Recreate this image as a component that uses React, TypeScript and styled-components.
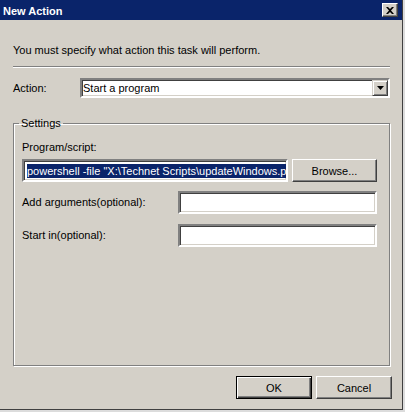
import React from 'react';
import styled, { createGlobalStyle } from 'styled-components';

const Global = createGlobalStyle`
  html, body { margin: 0; padding: 0; background: #dcdcdc; }
  body {
    width: 405px; height: 412px; overflow: hidden;
    font-family: "Liberation Sans", Arial, sans-serif;
    font-size: 11px; color: #000;
  }
`;

const Window = styled.div`
  width: 403px;
  height: 410px;
  box-sizing: border-box;
  background: #d4d0c8;
  border-right: 1px solid #404040;
  border-bottom: 1px solid #404040;
  display: flex;
  flex-direction: column;
`;

const TitleBar = styled.div`
  height: 20px;
  box-sizing: border-box;
  background: #0a246a;
  display: flex;
  align-items: center;
  justify-content: space-between;
  padding: 0 4px 0 3px;
`;

const Title = styled.span`
  color: #fff;
  font-weight: bold;
  font-size: 11px;
  line-height: 13px;
  padding-top: 3px;
`;

const CloseButton = styled.div`
  width: 16px;
  height: 14px;
  box-sizing: border-box;
  background: #d4d0c8;
  border-top: 1px solid #fff;
  border-left: 1px solid #fff;
  border-right: 1px solid #404040;
  border-bottom: 1px solid #404040;
  box-shadow: inset -1px -1px 0 #808080;
  display: flex;
  align-items: center;
  justify-content: center;
`;

const Content = styled.div`
  flex: 1;
  display: flex;
  flex-direction: column;
  padding: 0 12px 0 13px;
`;

const Intro = styled.div`
  margin-top: 24px;
  line-height: 13px;
`;

const Separator = styled.div`
  margin-top: 9px;
  height: 0;
  border-top: 1px solid #808080;
  border-bottom: 1px solid #fff;
`;

const Row = styled.div<{ $mt: number }>`
  display: flex;
  align-items: center;
  margin-top: ${(p) => p.$mt}px;
`;

const Label = styled.span<{ $w?: number }>`
  line-height: 13px;
  ${(p) => (p.$w ? `width: ${p.$w}px; flex: none;` : 'flex: 1;')}
`;

const Sunken = styled.div<{ $w?: number; $h: number }>`
  box-sizing: border-box;
  height: ${(p) => p.$h}px;
  ${(p) => (p.$w ? `width: ${p.$w}px; flex: none;` : 'flex: 1; min-width: 0;')}
  background: #fff;
  border-style: solid;
  border-width: 2px;
  border-color: #808080 #fff #fff #808080;
  box-shadow: inset 1px 1px 0 #404040, inset -1px -1px 0 #d4d0c8;
  display: flex;
  align-items: center;
  overflow: hidden;
  white-space: nowrap;
`;

const ComboText = styled.span`
  flex: 1;
  padding-left: 1px;
  line-height: 13px;
`;

const DropButton = styled.div`
  width: 16px;
  height: 16px;
  box-sizing: border-box;
  flex: none;
  background: #d4d0c8;
  border-top: 1px solid #d4d0c8;
  border-left: 1px solid #d4d0c8;
  border-right: 1px solid #404040;
  border-bottom: 1px solid #404040;
  box-shadow: inset 1px 1px 0 #fff, inset -1px -1px 0 #808080;
  display: flex;
  align-items: center;
  justify-content: center;
`;

const GroupBox = styled.fieldset`
  margin: 19px 0 0 0;
  height: 249px;
  box-sizing: border-box;
  padding: 0 12px 0 8px;
  border: 1px solid #808080;
  box-shadow: 1px 1px 0 #fff, inset 1px 1px 0 #fff;
  display: flex;
  flex-direction: column;
  min-width: 0;
`;

const Legend = styled.legend`
  padding: 0 2px;
  margin-left: -3px;
  line-height: 13px;
`;

const FieldLabel = styled.div`
  margin-top: 11px;
  line-height: 13px;
`;

const Selected = styled.span`
  margin-left: 3px;
  background: #0a246a;
  color: #fff;
  line-height: 14px;
`;

const Button = styled.button<{ $default?: boolean; $w?: number }>`
  width: ${(p) => p.$w ?? 76}px;
  height: 23px;
  box-sizing: border-box;
  flex: none;
  padding: 0;
  font-family: "Liberation Sans", Arial, sans-serif;
  font-size: 11px;
  color: #000;
  background: #d4d0c8;
  border-style: solid;
  border-width: 1px;
  border-color: ${(p) => (p.$default ? '#000' : '#fff #404040 #404040 #fff')};
  box-shadow: ${(p) =>
    p.$default
      ? 'inset 1px 1px 0 #fff, inset -1px -1px 0 #404040, inset -2px -2px 0 #808080'
      : 'inset -1px -1px 0 #808080'};
`;

const ProgramRow = styled(Row)`
  gap: 4px;
`;

const ButtonRow = styled.div`
  display: flex;
  justify-content: flex-end;
  gap: 4px;
  margin-top: 10px;
  margin-right: -2px;
`;

export default function App() {
  return (
    <>
      <Global />
      <Window>
        <TitleBar>
          <Title>New Action</Title>
          <CloseButton>
            <svg width="8" height="7" viewBox="0 0 8 7">
              <path d="M0 0h2l2 2 2-2h2L5 3.5 8 7H6L4 5 2 7H0l3-3.5z" fill="#000" />
            </svg>
          </CloseButton>
        </TitleBar>
        <Content>
          <Intro>You must specify what action this task will perform.</Intro>
          <Separator />
          <Row $mt={10}>
            <Label $w={67}>Action:</Label>
            <Sunken $h={20}>
              <ComboText>Start a program</ComboText>
              <DropButton>
                <svg width="7" height="4" viewBox="0 0 7 4">
                  <path d="M0 0h7L3.5 4z" fill="#000" />
                </svg>
              </DropButton>
            </Sunken>
          </Row>
          <GroupBox>
            <Legend>Settings</Legend>
            <FieldLabel>Program/script:</FieldLabel>
            <ProgramRow $mt={5}>
              <Sunken $h={23}>
                <Selected>powershell -file "X:\Technet Scripts\updateWindows.ps1"</Selected>
              </Sunken>
              <Button $w={85}>Browse...</Button>
            </ProgramRow>
            <Row $mt={9}>
              <Label>Add arguments(optional):</Label>
              <Sunken $w={199} $h={23} />
            </Row>
            <Row $mt={10}>
              <Label>Start in(optional):</Label>
              <Sunken $w={199} $h={23} />
            </Row>
          </GroupBox>
          <ButtonRow>
            <Button $default>OK</Button>
            <Button>Cancel</Button>
          </ButtonRow>
        </Content>
      </Window>
    </>
  );
}
